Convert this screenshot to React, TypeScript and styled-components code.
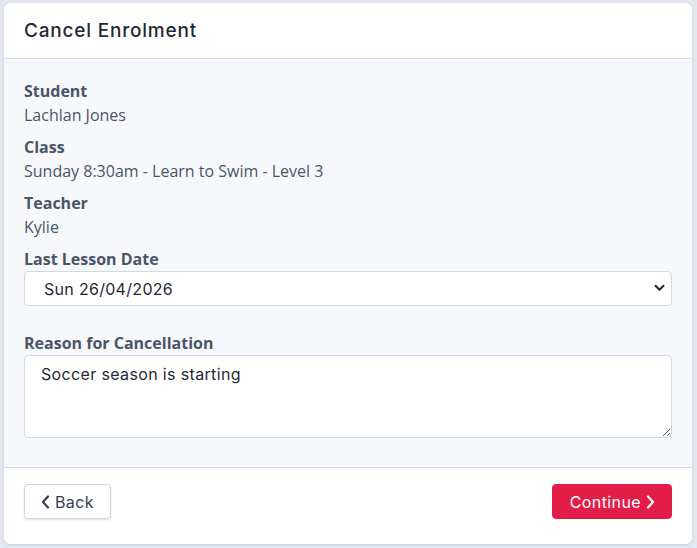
import React from "react";
import styled, { createGlobalStyle } from "styled-components";

const Global = createGlobalStyle`
  html, body { margin: 0; padding: 0; }
  body {
    background: #e3e8f0;
    width: 697px;
    height: 548px;
    overflow: hidden;
  }
  * { box-sizing: border-box; }
`;

const Page = styled.div`
  padding: 3px 5px 4px 4px;
  height: 548px;
`;

const Card = styled.div`
  background: #ffffff;
  border-radius: 6px;
  box-shadow: 0 1px 3px rgba(30, 41, 59, 0.12);
  overflow: hidden;
  display: flex;
  flex-direction: column;
  height: 541px;
`;

const Header = styled.div`
  height: 56px;
  padding: 0 20px;
  display: flex;
  align-items: center;
  border-bottom: 1px solid #d3dce8;
`;

const Title = styled.h1`
  margin: 0;
  font-family: "Inter", "Open Sans", sans-serif;
  font-weight: 500;
  font-size: 19px;
  letter-spacing: 0.8px;
  color: #1f2937;
`;

const Body = styled.div`
  background: #f7f8fc;
  padding: 20px 20px 29px;
  flex: 1;
  display: flex;
  flex-direction: column;
  border-bottom: 1px solid #d3dce8;
`;

const Field = styled.div<{ $gap?: number }>`
  display: flex;
  flex-direction: column;
  margin-bottom: ${(p) => p.$gap ?? 8}px;
`;

const Label = styled.div`
  font-family: "Open Sans", sans-serif;
  font-weight: 700;
  font-size: 16px;
  line-height: 24px;
  color: #4a5568;
`;

const Value = styled.div`
  font-family: "Open Sans", sans-serif;
  font-weight: 400;
  font-size: 16px;
  line-height: 24px;
  color: #4a5568;
`;

const SelectWrap = styled.div`
  position: relative;
  height: 35px;
`;

const Select = styled.select`
  appearance: none;
  -webkit-appearance: none;
  width: 100%;
  height: 35px;
  border: 1px solid #cfd9e8;
  border-radius: 4px;
  background: #ffffff;
  padding: 0 19px;
  font-family: "Inter", "Open Sans", sans-serif;
  font-size: 16px;
  letter-spacing: 0.3px;
  color: #1f2937;
  outline: none;
`;

const Chevron = styled.svg`
  position: absolute;
  right: 7px;
  top: 13px;
  pointer-events: none;
`;

const TextArea = styled.textarea`
  width: 100%;
  height: 83px;
  border: 1px solid #cfd9e8;
  border-radius: 4px;
  background: #ffffff;
  padding: 7px 16px;
  font-family: "Inter", "Open Sans", sans-serif;
  font-size: 16px;
  letter-spacing: 0.35px;
  line-height: 22px;
  color: #1f2937;
  outline: none;
  display: block;
`;

const Footer = styled.div`
  padding: 16px 20px 0;
  height: 76px;
  display: flex;
  justify-content: space-between;
  align-items: flex-start;
`;

const Button = styled.button<{ $primary?: boolean }>`
  height: 35px;
  display: inline-flex;
  align-items: center;
  gap: 5px;
  border-radius: 4px;
  font-family: "Inter", "Open Sans", sans-serif;
  font-size: 16px;
  font-weight: 400;
  letter-spacing: 0.4px;
  cursor: pointer;
  padding: ${(p) => (p.$primary ? "0 16px 0 17px" : "0 16px")};
  border: 1px solid ${(p) => (p.$primary ? "#e11d48" : "#cfd4dc")};
  background: ${(p) => (p.$primary ? "#e11d48" : "#ffffff")};
  color: ${(p) => (p.$primary ? "#ffffff" : "#374151")};
  box-shadow: ${(p) => (p.$primary ? "none" : "0 1px 2px rgba(0,0,0,0.12)")};
`;

const ChevLeft = () => (
  <svg width="9" height="14" viewBox="0 0 9 14" fill="none">
    <path d="M7 1.5L2 7l5 5.5" stroke="currentColor" strokeWidth="2.2" strokeLinecap="round" strokeLinejoin="round" />
  </svg>
);

const ChevRight = () => (
  <svg width="9" height="14" viewBox="0 0 9 14" fill="none">
    <path d="M2 1.5L7 7l-5 5.5" stroke="currentColor" strokeWidth="2.2" strokeLinecap="round" strokeLinejoin="round" />
  </svg>
);

export default function App() {
  return (
    <>
      <Global />
      <Page>
        <Card>
          <Header>
            <Title>Cancel Enrolment</Title>
          </Header>
          <Body>
            <Field>
              <Label>Student</Label>
              <Value>Lachlan Jones</Value>
            </Field>
            <Field>
              <Label>Class</Label>
              <Value>Sunday 8:30am - Learn to Swim - Level 3</Value>
            </Field>
            <Field>
              <Label>Teacher</Label>
              <Value>Kylie</Value>
            </Field>
            <Field $gap={25}>
              <Label>Last Lesson Date</Label>
              <SelectWrap>
                <Select defaultValue="2026-04-26">
                  <option value="2026-04-26">Sun 26/04/2026</option>
                </Select>
                <Chevron width="11" height="8" viewBox="0 0 11 8" fill="none">
                  <path d="M1.5 1.8L5.5 5.8l4-4" stroke="#1f2937" strokeWidth="2" strokeLinecap="round" strokeLinejoin="round" />
                </Chevron>
              </SelectWrap>
            </Field>
            <Field $gap={0}>
              <Label>Reason for Cancellation</Label>
              <TextArea defaultValue="Soccer season is starting" />
            </Field>
          </Body>
          <Footer>
            <Button>
              <ChevLeft />
              Back
            </Button>
            <Button $primary>
              Continue
              <ChevRight />
            </Button>
          </Footer>
        </Card>
      </Page>
    </>
  );
}
